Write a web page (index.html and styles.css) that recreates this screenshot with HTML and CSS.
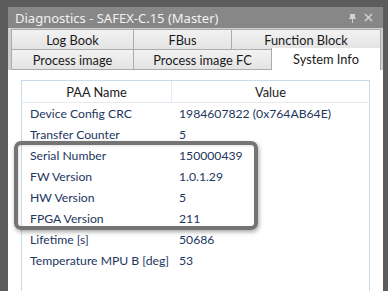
FILE: index.html
```html
<!DOCTYPE html>
<html lang="en">
<head>
  <meta charset="UTF-8" />
  <title>Diagnostics - SAFEX-C.15 (Master)</title>
  <link rel="stylesheet" href="styles.css">
</head>
<body>
  <div class="frame">
    <div class="panel">
      <div class="titlebar">
        <span class="title">Diagnostics - SAFEX-C.15 (Master)</span>
        <span class="title-icons">
          <svg width="9" height="10" viewBox="0 0 9 10"><path d="M2 1h5v4H2z M1 5h7v1H1z M4 6h1v4H4z" fill="#d0d0d0"/></svg>
          <svg width="9" height="9" viewBox="0 0 9 9"><path d="M1 1l7 7M8 1l-7 7" stroke="#d0d0d0" stroke-width="1.6"/></svg>
        </span>
      </div>

      <div class="tabs">
        <div class="tab-row row-top">
          <div class="tab">Log Book</div>
          <div class="tab">FBus</div>
          <div class="tab">Function Block</div>
        </div>
        <div class="tab-row row-bottom">
          <div class="tab">Process image</div>
          <div class="tab">Process image FC</div>
          <div class="tab active">System Info</div>
        </div>
      </div>

      <div class="content">
        <div class="list">
          <div class="list-head">
            <div class="col-name">PAA Name</div>
            <div class="col-value">Value</div>
          </div>
          <div class="list-row"><span class="name">Device Config CRC</span><span class="value">1984607822 (0x764AB64E)</span></div>
          <div class="list-row"><span class="name">Transfer Counter</span><span class="value">5</span></div>
          <div class="list-row"><span class="name">Serial Number</span><span class="value">150000439</span></div>
          <div class="list-row"><span class="name">FW Version</span><span class="value">1.0.1.29</span></div>
          <div class="list-row"><span class="name">HW Version</span><span class="value">5</span></div>
          <div class="list-row"><span class="name">FPGA Version</span><span class="value">211</span></div>
          <div class="list-row"><span class="name">Lifetime [s]</span><span class="value">50686</span></div>
          <div class="list-row"><span class="name">Temperature MPU B [deg]</span><span class="value">53</span></div>
        </div>
        <div class="highlight"></div>
      </div>
    </div>
  </div>
</body>
</html>
```

FILE: styles.css
```css
html, body {
  margin: 0;
  height: 100%;
  overflow: hidden;
}
body {
  background: #5c5c5c;
  font-family: 'Lato', 'Noto Sans', sans-serif;
  font-size: 12.2px;
}
.frame {
  padding: 7px 5px 0 8px;
  height: 100%;
  box-sizing: border-box;
}
.panel {
  background: #cfcfcf;
  height: 100%;
  display: flex;
  flex-direction: column;
}
.titlebar {
  height: 21px;
  background: #878787;
  color: #f2f2f2;
  font-family: 'Noto Sans', sans-serif;
  font-size: 13px;
  display: flex;
  align-items: center;
  justify-content: space-between;
  padding: 0 10px 0 7px;
}
.title-icons {
  display: flex;
  gap: 7px;
  align-items: center;
}
.tabs {
  padding: 1px 2px 0 3px;
  font-size: 12.8px;
}
.tab-row {
  display: grid;
  height: 20px;
}
.row-top {
  grid-template-columns: 122px 98px 1fr;
  height: 21px;
}
.row-bottom {
  grid-template-columns: 122px 138px 1fr;
}
.tab {
  background: linear-gradient(#f2f2f2, #e4e4e4);
  border: 1px solid #acacac;
  border-right: none;
  color: #1a1a1a;
  display: flex;
  align-items: center;
  justify-content: center;
  white-space: nowrap;
}
.tab:last-child {
  border-right: 1px solid #acacac;
}
.row-bottom .tab {
  border-top: none;
}
.tab.active {
  background: #fff;
  margin-top: -2px;
  border-bottom: none;
  position: relative;
}
.content {
  flex: 1;
  background: #fff;
  position: relative;
  padding: 10px 13px 0 13px;
}
.list {
  border: 1px solid #c9dbea;
  border-bottom: none;
  height: 100%;
  box-sizing: border-box;
}
.list-head {
  display: grid;
  grid-template-columns: 150px 1fr;
  height: 21px;
  border-bottom: 1px solid #e4ebf2;
  color: #1a1a1a;
  font-size: 12.8px;
}
.list-head div {
  display: flex;
  align-items: center;
  justify-content: center;
}
.col-name {
  border-right: 1px solid #e4ebf2;
}
.list-row {
  display: grid;
  grid-template-columns: 150px 1fr;
  height: 21px;
  align-items: center;
  color: #23365e;
  white-space: nowrap;
}
.name {
  padding-left: 8px;
}
.value {
  padding-left: 7px;
}
.highlight {
  position: absolute;
  left: 6px;
  top: 71px;
  width: 236px;
  height: 81px;
  border: 4px solid #747474;
  border-radius: 7px;
  box-shadow: 1px 2px 4px rgba(0, 0, 0, 0.35), inset 1px 1px 3px rgba(0, 0, 0, 0.12);
}
```
